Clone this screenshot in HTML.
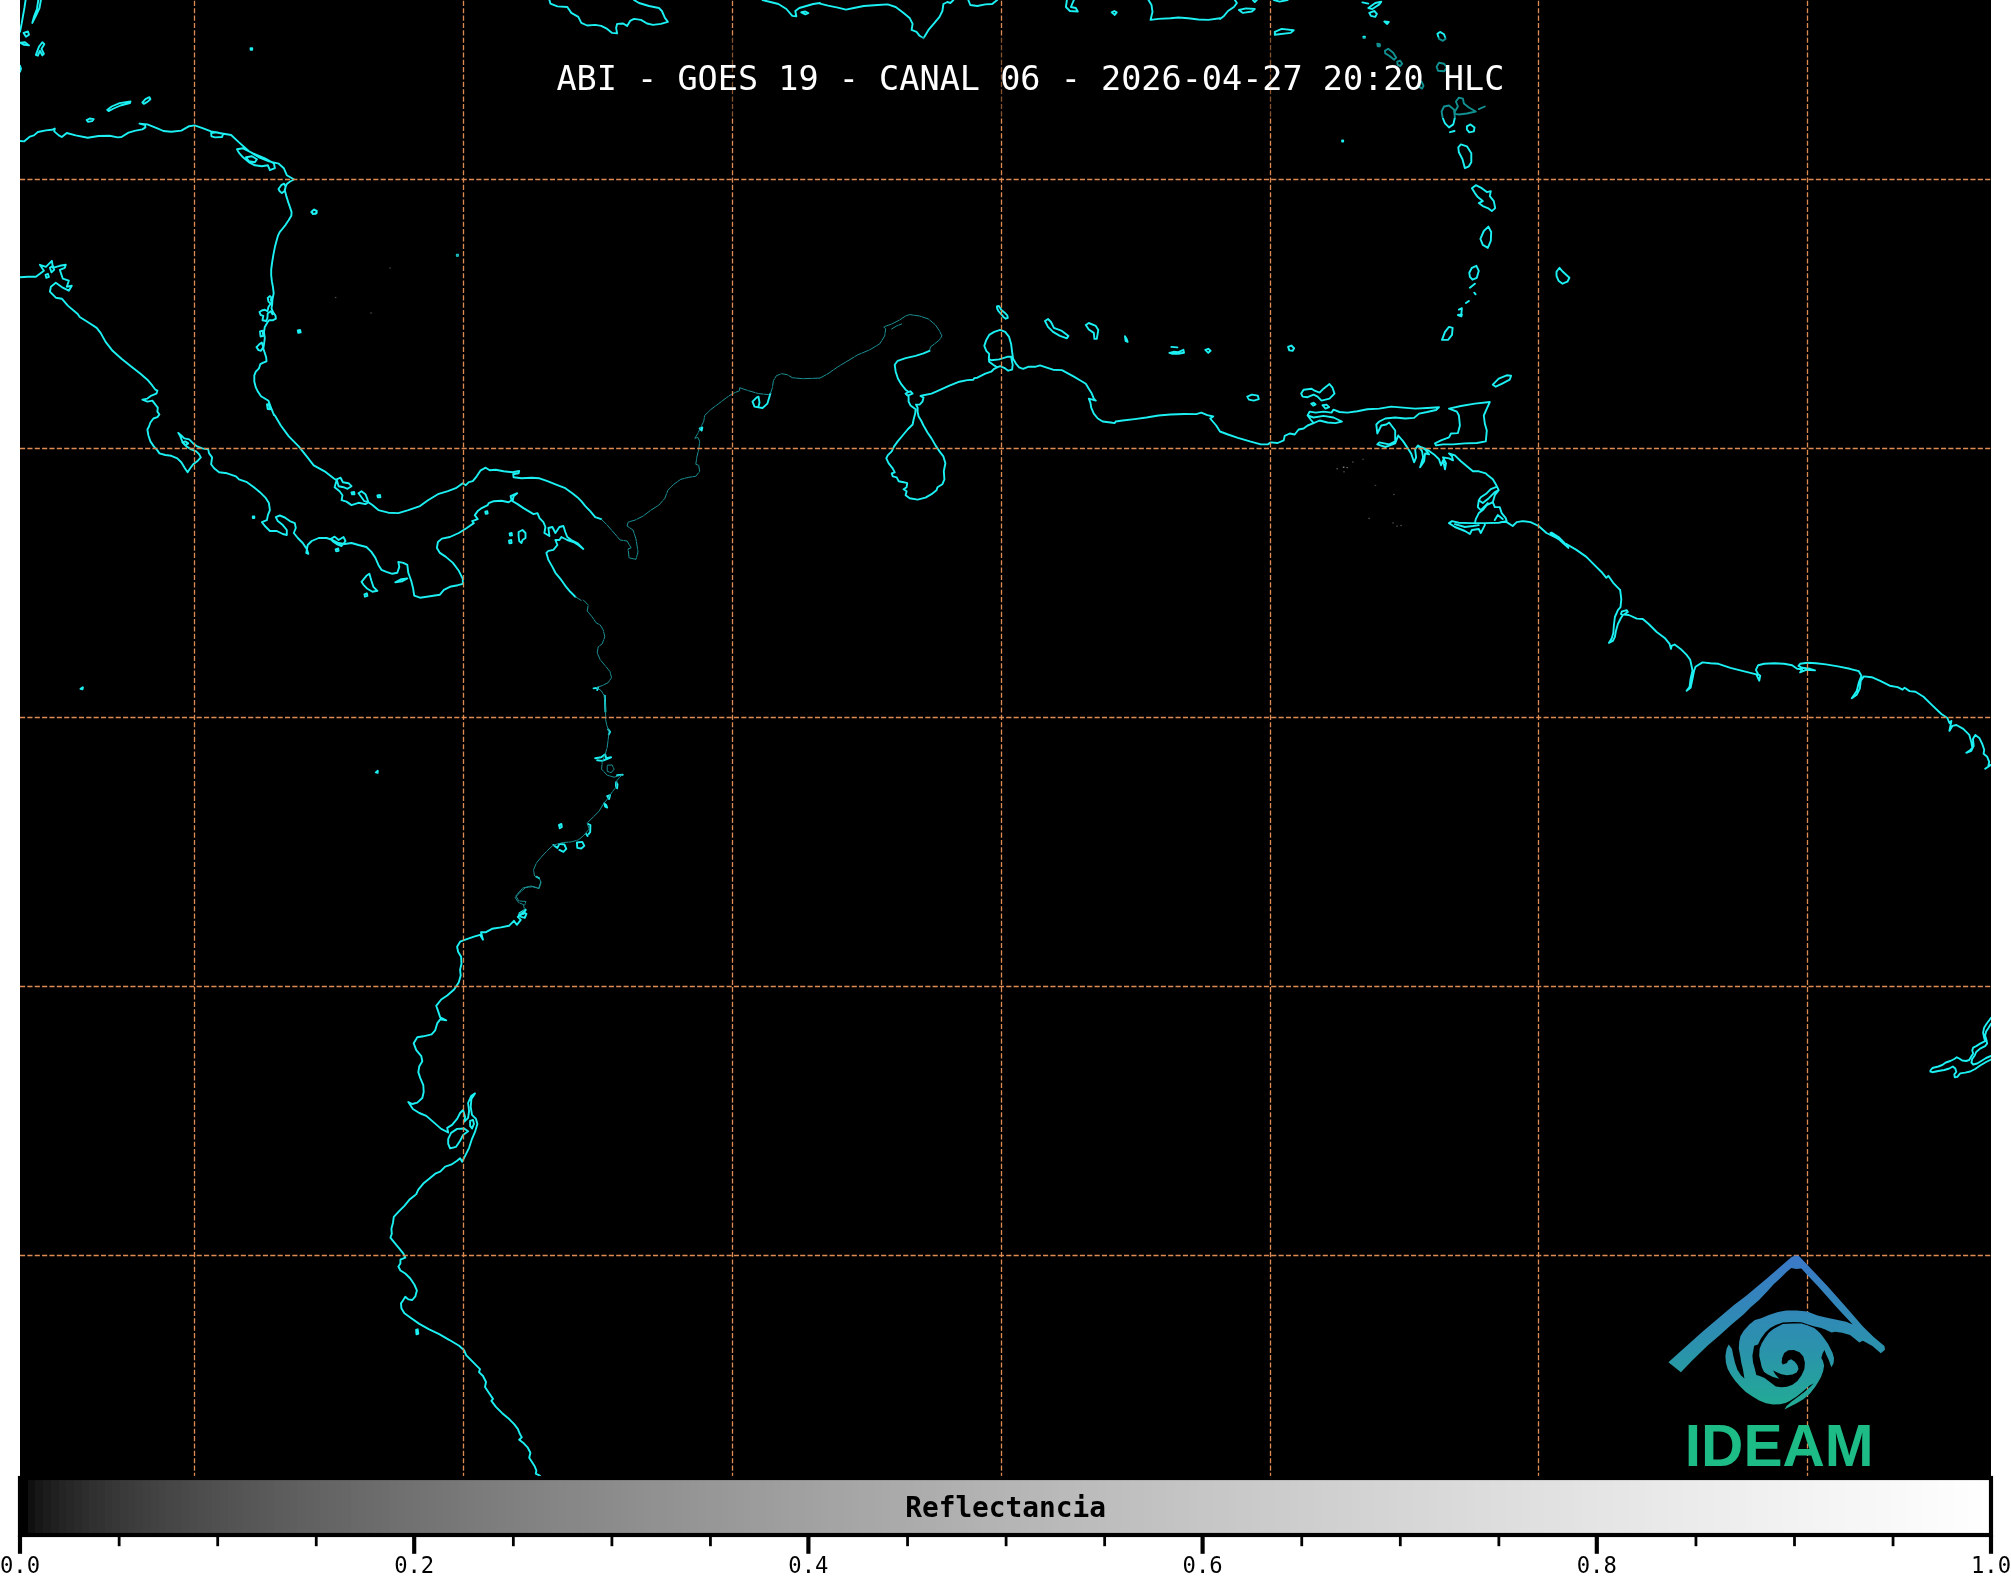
<!DOCTYPE html>
<html lang="es"><head><meta charset="utf-8"><title>ABI - GOES 19 - CANAL 06</title>
<style>
html,body{margin:0;padding:0;background:#fff;}
body{width:2011px;height:1577px;overflow:hidden;}
svg{display:block;will-change:transform;}
.mono{font-family:"DejaVu Sans Mono","Liberation Mono",monospace;}
.coast{fill:none;stroke:#1cf0f2;stroke-width:1.9;stroke-linejoin:round;stroke-linecap:round;}
.dim{stroke:#1c979b;stroke-width:0.95;stroke-dasharray:7 1.1;}

.grid{fill:none;stroke:#df8a52;stroke-width:1.3;stroke-dasharray:5.14 2.22;}
</style></head><body>
<svg width="2011" height="1577" viewBox="0 0 2011 1577">
<defs>
<linearGradient id="lg" x1="0" y1="1255" x2="0" y2="1470" gradientUnits="userSpaceOnUse">
<stop offset="0" stop-color="#3b78c8"/><stop offset="0.45" stop-color="#2a93ab"/><stop offset="0.8" stop-color="#1fb48c"/><stop offset="1" stop-color="#1dbb85"/>
</linearGradient>
<clipPath id="mapclip"><rect x="20" y="0" width="1971" height="1478"/></clipPath>
</defs>
<rect x="0" y="0" width="2011" height="1577" fill="#fff"/>
<rect x="20" y="0" width="1971" height="1478" fill="#000"/>
<g class="coast" clip-path="url(#mapclip)">
<path d="M25.6 0.0L24.4 8.0L23.0 15.9L21.6 23.9L20.0 31.9M40.9 0.0L39.5 8.0L35.9 15.9L32.3 22.9L33.9 16.9L36.9 9.0L38.3 0.0M23.6 32.9L28.0 31.5L29.0 34.8L26.0 36.8ZM20.0 42.8L25.0 42.2L29.0 45.4L24.0 44.8ZM35.9 54.8L38.9 46.8L42.3 42.2L44.3 44.2L41.5 48.8L43.9 53.8L42.3 55.4L39.9 50.8L37.9 55.7ZM20.0 65.7L21.0 68.7L20.0 71.7M20.0 141.0L24.0 141.4L30.0 136.6L33.9 135.4L37.9 132.0L45.9 130.4L51.9 129.8L54.8 128.6L54.2 131.4L58.8 135.4L61.8 137.0L66.8 133.0L75.7 135.4L87.7 137.8L98.6 136.0L109.6 135.8L117.6 137.4L121.5 137.0L128.5 132.6L135.5 130.6L142.4 129.4L145.4 127.4L145.0 125.0L139.5 123.6L147.4 124.4L157.4 128.4L163.4 131.0L171.3 131.8L181.3 130.6L189.2 126.2L194.6 125.4L203.2 128.4L211.1 131.4L219.1 133.0L231.1 135.0L239.0 142.4L249.0 151.3L258.9 157.3L268.9 161.3L278.8 163.7L283.8 168.2L286.8 175.2L293.8 179.2M211.1 133.0L217.1 132.4L223.1 133.8L222.1 137.0L215.1 137.4L211.5 136.4ZM237.0 149.3L243.0 148.3L253.0 153.3L264.9 158.3L273.9 163.3L274.9 168.2L269.9 170.2L267.9 165.3L261.9 166.3L254.9 165.3L249.0 162.3L243.0 157.3L239.0 152.9ZM246.0 157.3L252.0 156.3L256.9 159.3L254.9 162.3L249.0 161.3ZM86.7 120.1L89.7 118.5L93.7 119.1L92.1 121.1L88.1 121.9ZM107.2 109.9L111.6 106.5L119.6 103.1L130.5 101.5L129.9 103.1L120.5 105.5L113.6 108.5L108.6 111.1ZM142.4 102.5L145.4 99.2L149.4 97.2L150.4 99.2L147.4 101.9L143.8 103.9ZM250.6 48.2L252.2 48.2L252.2 49.8L250.6 49.8ZM311.7 211.4L314.3 209.5L316.7 211.1L315.7 213.8L312.7 214.0ZM20.0 277.2L28.0 276.8L35.9 276.8L39.9 273.8L43.9 270.8L39.9 264.8L45.9 266.8L51.9 260.8L52.9 267.8L59.8 265.8L65.8 264.8L64.8 267.8L59.8 269.8L62.8 278.7L68.8 280.7L66.8 286.7L71.8 285.7L68.8 290.7L62.8 287.7L55.8 282.7L50.9 286.7L49.9 291.7L55.8 297.7L61.8 298.7L67.8 305.6L77.7 314.0M49.9 267.8L52.9 265.8L54.2 269.8L51.5 272.4ZM45.5 274.8L47.9 273.8L48.9 276.8L46.3 277.8ZM549.4 0.0L550.4 3.6L557.4 6.4L567.3 7.0L571.3 12.9L578.3 16.9L581.3 22.9L587.2 25.5L595.2 24.9L601.2 25.9L607.2 28.9L612.1 32.9L617.1 33.4L616.1 27.9L617.1 23.9L623.1 23.5L627.1 25.9L630.1 20.9L634.0 18.9L641.0 19.9L647.0 23.5L653.0 24.9L660.9 23.9L667.9 21.9L664.9 17.9L661.9 11.0L658.9 8.0L649.0 6.0L639.0 3.0L634.0 0.0M762.5 0.0L770.4 2.0L778.4 4.0L786.4 9.0L792.3 15.9L796.3 16.3L795.3 11.0L799.3 8.0L806.3 6.0L813.2 4.0L820.0 3.0M801.3 12.3L805.3 11.5L808.3 13.1L805.3 14.3ZM456.8 254.7L458.0 254.7L458.0 255.8L456.8 255.8ZM820.0 3.6L828.0 5.6L837.9 7.6L845.9 9.6L853.8 8.0L863.8 6.0L877.7 5.0L887.7 4.4L895.7 7.0L903.6 12.9L909.6 17.9L912.6 23.9L911.6 29.9L916.6 31.9L919.6 35.8L923.5 38.2L928.5 29.9L934.5 22.9L939.5 16.9L942.4 11.0L943.4 4.0L947.4 2.0L950.4 3.0L953.4 0.0M968.3 0.0L970.3 5.0L977.3 6.0L985.3 4.4L992.2 4.0L997.2 0.0M1066.9 0.0L1065.9 7.0L1069.9 11.0L1077.8 11.5L1075.8 8.0L1070.9 7.0L1073.9 0.0M1111.7 12.3L1114.3 11.0L1116.7 12.3L1114.7 14.9ZM1148.5 0.0L1151.5 5.0L1152.5 11.9L1150.5 19.9L1158.5 18.9L1170.4 18.3L1178.4 17.5L1188.3 18.3L1198.3 19.5L1208.3 19.9L1220.0 18.3M1220.0 18.9L1224.0 15.9L1228.0 11.0L1233.9 7.0L1236.9 3.0L1234.9 0.0M1238.9 10.0L1245.9 8.4L1254.8 9.0L1251.9 11.5L1242.9 12.9ZM1252.9 0.0L1254.8 2.0L1256.8 0.0M1273.8 0.0L1279.7 1.6L1287.7 0.0M1274.8 31.9L1281.7 28.9L1293.7 30.3L1290.7 32.9L1274.8 34.8ZM1362.4 2.4L1368.3 3.6M1368.3 8.0L1375.3 3.0L1381.3 1.6L1379.3 4.4L1372.3 9.0ZM1369.3 12.9L1374.3 11.0L1376.9 13.9L1375.3 16.9L1370.9 15.9ZM1384.3 21.5L1388.8 21.9L1387.2 23.9ZM1363.4 36.6L1364.9 36.6L1364.9 38.0L1363.4 38.0ZM1437.4 33.8L1440.0 31.9L1444.0 34.2L1445.6 38.8L1443.0 40.8L1439.0 38.8ZM1342.1 140.4L1343.2 140.4L1343.2 141.6L1342.1 141.6ZM1458.3 147.3L1460.9 144.4L1466.9 146.3L1471.3 153.3L1471.3 162.3L1468.9 166.3L1464.9 168.2L1462.5 159.3L1458.9 152.3ZM1471.9 188.2L1475.8 185.2L1481.8 188.2L1486.8 192.1L1490.8 191.1L1489.8 196.1L1493.8 201.1L1495.2 208.1L1491.8 211.1L1487.8 208.1L1482.8 206.1L1478.8 203.1L1482.8 201.1L1477.8 197.1L1474.9 193.1ZM1480.4 238.9L1483.8 231.0L1488.4 226.6L1491.2 232.0L1490.8 240.9L1487.8 247.9L1482.8 244.9ZM1469.3 272.8L1471.9 267.8L1476.4 265.8L1478.8 270.8L1476.8 277.8L1472.5 279.7L1469.9 276.8ZM1469.9 287.7L1474.9 283.7M1474.3 292.7L1475.6 294.3M1465.9 303.0L1468.9 301.0M1458.9 309.6L1461.9 308.2L1461.3 314.0M1556.5 271.8L1559.5 267.8L1562.9 271.8L1569.4 277.8L1567.4 281.7L1562.5 283.7L1558.5 280.7L1556.5 275.8ZM1466.9 126.4L1470.5 124.4L1474.5 127.4L1473.9 131.4L1469.3 132.4L1466.9 129.4ZM1450.0 132.2L1454.5 131.0M77.7 314.0L79.7 317.0L87.7 322.0L96.7 327.9L100.6 332.9L105.6 341.9L112.6 350.8L121.5 358.8L131.5 366.8L140.5 373.7L147.4 379.7L152.4 385.7L155.4 389.7L157.4 390.7L156.4 393.6L151.4 395.6L147.4 398.6L142.4 399.6L147.4 401.6L152.4 400.6L155.4 404.6L157.8 407.6L157.4 411.6L159.4 414.5L157.4 417.1L153.4 418.5L150.4 422.5L149.0 426.5L147.4 429.5L148.4 435.5L150.4 441.4L153.8 446.4L157.4 450.4L159.4 453.4L165.3 455.0L171.3 455.8L177.3 458.4L181.3 462.3L184.9 468.3L187.6 472.3L190.2 468.3L193.2 464.3L197.2 461.3L200.8 457.4L199.2 454.4L196.2 451.4L191.2 449.4L186.3 446.4L182.3 441.4L180.3 436.4L178.3 432.9L181.3 435.5L184.3 438.4L189.2 439.4L193.2 443.4L197.2 446.4L202.2 448.4L208.2 449.4L209.1 453.4L212.1 457.4L211.1 464.3L214.1 468.3L219.1 472.3L227.1 473.3L236.0 476.3L239.0 479.3L247.0 482.2L253.9 487.2L259.9 492.2L265.9 498.2L268.9 503.1L269.9 510.1L267.9 515.1L266.9 520.1L261.9 522.1L264.9 526.0L269.9 531.0L276.8 531.0L282.8 534.0L286.8 535.0L286.8 530.0L282.8 525.1L277.8 521.1L275.8 517.1L279.8 515.5L284.8 517.5L289.8 521.1L294.8 523.1L295.8 528.0L293.8 533.0L297.8 538.0L302.7 543.0L306.7 548.9L308.3 553.9L306.3 552.9L307.7 545.0L311.7 541.0L318.7 538.0L326.6 538.0L332.6 540.0L338.6 543.0L344.5 544.0L351.5 543.0L358.5 545.0L366.4 547.0L371.4 551.9L375.4 557.9L378.4 564.9L381.4 569.8L386.4 571.8L392.3 573.8L397.3 572.8L399.3 566.9L398.3 561.9L403.3 562.9L407.3 564.9L408.3 572.8L411.2 580.8L413.2 588.8L414.2 595.7L420.0 597.7M182.3 442.4L185.3 441.4L188.2 443.4L185.3 445.4ZM330.6 539.0L334.6 536.6L338.6 540.0L343.5 537.0L345.5 541.0L341.6 546.0L336.6 544.0L333.6 542.0ZM335.6 549.3L338.2 548.5L338.6 550.9L336.2 551.3ZM361.5 581.8L366.4 575.8L369.4 573.8L371.4 580.8L373.4 586.8L377.4 590.8L372.4 591.8L367.4 588.8L363.5 584.8ZM364.4 594.3L366.8 593.3L367.4 595.9L365.0 596.7ZM395.3 582.4L401.3 579.2L407.3 578.4L402.3 581.2ZM252.8 516.5L254.3 516.5L254.3 518.1L252.8 518.1ZM274.9 415.5L280.8 425.5L288.8 436.4L298.7 446.4L306.7 456.4L313.7 465.3L324.6 471.3L333.6 478.3L336.6 480.3L334.6 487.2L339.6 491.2L342.5 495.2L341.6 500.2L346.5 501.6L351.5 505.1L358.5 502.8L365.4 504.1L368.4 502.2L372.4 505.1L378.4 510.1L388.3 512.7L398.3 513.1L408.3 510.1L420.0 506.1M336.6 479.3L340.6 477.7L342.9 482.2L348.5 483.2L351.5 486.2L347.5 488.8L343.5 487.2L338.6 486.2ZM358.5 493.2L361.5 491.2L365.4 494.2L367.4 499.2L368.4 502.2L364.4 501.2L361.5 497.2ZM351.5 492.4L354.1 492.0L354.5 494.2L352.1 494.4ZM377.4 495.4L380.0 495.0L380.4 497.2L377.8 497.4ZM297.8 330.5L300.1 329.9L300.7 332.3L298.3 332.9ZM420.0 506.1L428.0 500.2L437.9 494.2L447.9 491.2L455.8 488.2L462.8 483.2L465.8 485.2L468.8 482.2L472.8 481.2L476.7 476.3L480.7 470.3L485.7 467.7L489.7 470.3L495.7 469.7L503.6 471.3L512.6 472.3L519.2 470.9L518.6 473.3L513.2 474.3L513.6 477.3L521.5 478.3L531.5 477.7L539.5 478.3L547.4 481.2L557.4 485.2L565.3 488.2L572.3 493.2L577.3 497.2L581.3 501.2L585.3 506.1L590.2 511.1L595.2 517.1L601.2 519.1M758.5 406.6L759.5 402.6L758.5 396.6L756.5 397.6L752.5 401.6L754.5 406.6L762.5 408.0L767.4 403.6L770.4 393.6M699.7 428.5L702.3 427.5L701.7 430.5ZM420.0 597.7L430.0 596.3L439.9 594.7L443.9 589.8L449.9 586.8L457.8 585.2L462.8 583.8L462.8 578.8L458.8 570.8L452.9 562.9L445.9 556.9L439.9 552.9L436.9 547.9L437.9 542.0L441.9 538.6L449.9 537.0L458.8 533.0L466.8 528.0L473.8 523.1L472.2 521.1L477.7 519.1L474.8 515.1L477.7 511.1L481.7 508.1L487.7 505.1L488.7 503.1L493.7 501.2L501.6 500.8L508.6 502.2L511.6 500.2L510.6 496.2L517.2 493.2L513.6 496.2L512.6 501.2L517.6 504.1L523.5 508.1L528.5 511.1L533.5 514.1L537.5 513.1L539.5 518.1L543.4 522.1L545.4 527.0L544.4 533.0L549.4 536.0L548.4 528.0L552.4 527.0L555.4 533.0L559.4 527.0L563.4 526.0L565.3 532.0L567.3 537.0L571.3 540.0L577.3 543.0L583.3 548.9L578.3 545.0L573.3 542.0L567.3 540.0L561.4 537.0L559.4 540.0L555.4 540.0L557.4 545.0L553.4 549.9L548.4 550.9L546.4 552.9L548.4 559.9L552.4 566.9L555.4 572.8L560.4 578.8L565.3 585.8L570.3 591.8L575.3 596.7M518.6 532.0L522.5 530.0L525.5 533.0L525.5 538.0L522.5 540.0L521.5 543.0L519.2 541.0L518.6 536.0ZM509.6 533.4L511.6 533.0L512.0 535.4L510.0 535.6ZM509.0 540.6L511.2 540.0L511.6 543.0L509.4 543.4ZM485.3 511.7L487.3 511.3L487.7 513.5L485.7 513.7ZM929.5 350.8L923.5 353.4L915.6 355.8L905.6 358.2L897.7 360.8L894.7 364.8L895.7 371.7L898.0 378.7L901.6 384.7L905.6 389.7L908.6 392.0L905.6 393.6L907.6 395.6L912.6 393.6L910.6 391.3L908.6 392.0M908.6 395.6L908.6 401.6L910.6 405.6L915.6 409.2L915.2 413.6L913.6 419.5L912.6 424.5L907.6 429.5L902.6 435.5L897.7 441.4L894.1 446.4L891.7 451.4L887.7 455.4L886.3 458.4L888.7 463.3L892.7 468.3L894.7 472.3L891.7 473.3L892.7 476.3L896.7 477.3L898.6 481.2L903.6 482.2L907.2 483.2L906.6 487.2L903.6 489.2L906.6 491.2L905.6 495.2L909.6 498.2L917.6 499.6L925.5 497.6L931.5 494.2L936.5 490.2L937.5 487.2L942.4 484.2L944.4 479.3L943.8 471.3L945.4 463.3L943.4 456.4L939.5 451.4L935.5 445.4L931.5 438.4L927.5 432.5L923.5 425.5L921.1 420.5L918.6 416.5L917.6 411.6L917.6 407.6L916.0 404.6L919.6 404.6L922.5 401.6L923.5 397.6L920.5 396.0L923.5 395.2L931.5 393.6L939.5 390.1L949.4 385.7L959.4 381.7L967.3 380.1L973.3 379.7L974.3 378.1L977.3 377.7L985.3 373.7L991.2 371.7L994.2 368.8L997.2 367.4L993.2 364.8L989.2 361.8L988.8 358.8L991.2 360.2L999.2 359.4L1007.2 356.8L1011.1 356.8L1012.7 364.8L1012.1 369.7L1008.2 370.7L1004.2 367.8L1000.2 366.2L997.2 367.4M988.8 358.8L989.2 353.8L986.3 350.8L984.3 345.9L986.3 339.9L989.2 334.9L994.2 331.9L1000.2 329.9L1005.2 331.9L1009.1 336.9L1011.1 343.9L1012.1 351.8L1013.1 358.8L1016.1 363.8L1019.1 367.4L1023.1 368.8L1028.1 366.8L1035.0 366.8L1040.0 365.4L1046.0 367.4L1053.0 369.7L1061.9 370.1L1067.9 373.3L1073.9 376.7L1080.8 380.7L1085.8 383.7L1088.8 388.7L1091.8 393.6L1093.8 398.6L1095.8 400.6L1088.8 398.6L1090.4 402.6L1091.2 407.6L1093.8 413.6L1097.8 418.5L1102.7 421.5L1110.7 422.5L1114.7 423.1L1115.7 421.5L1122.6 420.5L1134.6 419.1L1146.5 417.5L1158.5 415.5L1170.4 414.5L1184.4 414.0L1196.3 414.1L1201.3 412.6L1207.3 415.1L1213.2 416.5L1210.2 418.5L1216.2 425.5L1220.0 431.5M996.9 306.5L998.9 306.0L1001.4 310.0L1004.4 312.4L1007.3 315.4L1007.8 317.9L1005.8 318.7L1003.4 316.9L1000.9 313.9L998.4 311.0L997.2 308.5ZM1045.0 321.0L1048.0 319.0L1051.0 322.0L1053.9 327.9L1061.9 330.9L1068.5 335.9L1066.9 338.3L1059.9 335.9L1053.0 331.9L1048.0 326.9ZM1085.8 325.0L1088.8 323.0L1095.8 325.9L1098.3 329.9L1096.8 338.9L1094.4 338.9L1093.8 332.9L1088.8 329.5ZM1125.0 336.3L1126.6 338.9L1127.6 341.9L1125.6 340.9ZM1169.4 352.8L1173.4 351.8L1178.4 352.2L1183.4 349.8L1184.0 352.8L1178.4 353.8L1172.4 353.8ZM1171.4 346.9L1177.4 347.4M1205.3 349.8L1208.3 348.8L1210.6 350.8L1208.3 352.8ZM1220.0 431.5L1228.0 434.5L1237.9 437.8L1249.9 441.4L1260.8 444.4L1267.8 444.4L1270.8 442.4L1277.7 443.0L1283.7 440.4L1284.7 435.9L1289.7 433.5L1294.7 434.5L1298.6 429.5L1303.6 428.5L1307.6 425.5L1313.6 423.1L1310.6 419.5L1307.6 415.5L1309.6 411.6L1315.6 412.6L1323.5 411.6L1331.5 412.6L1333.5 409.6L1339.5 412.0L1347.4 412.6L1357.4 411.2L1367.3 409.2L1379.3 408.6L1391.2 406.6L1403.2 407.6L1415.1 408.6L1427.1 408.0L1439.0 407.2L1436.0 410.0L1427.1 412.0L1419.1 413.6L1414.1 417.9L1405.2 418.5L1395.2 417.5L1385.3 418.5L1379.3 421.5L1376.3 424.5L1377.3 433.5L1381.3 425.5L1386.3 424.5L1389.2 422.5L1395.2 430.5L1395.2 441.4L1389.2 444.4L1379.3 442.4L1377.3 444.4L1385.3 447.0L1395.2 443.4L1398.2 435.5L1403.2 441.4L1407.2 447.4L1411.1 453.4L1414.1 462.3L1416.1 457.4L1415.1 449.4L1418.1 445.4L1422.1 451.4L1423.1 457.4L1420.1 467.3L1424.1 461.3L1425.1 453.4L1429.1 454.4L1425.1 449.4L1419.1 446.4L1427.1 449.4L1434.0 454.4L1439.0 459.3L1441.0 465.3L1443.0 460.3L1445.0 469.3L1446.0 463.3L1443.0 457.4L1449.0 458.4L1453.0 460.3L1452.0 456.4L1449.0 453.4L1454.9 455.4L1460.9 461.3L1466.9 466.3L1472.9 471.3L1478.8 471.3L1485.8 473.3L1487.8 475.3L1492.8 479.3L1495.8 484.2L1498.7 490.2L1494.8 495.2L1492.8 502.2L1494.8 507.1L1499.7 507.1L1501.7 513.1L1505.7 518.1L1506.7 521.1L1500.7 522.1L1506.7 522.1L1512.7 526.0L1516.7 522.1L1522.6 521.1L1530.6 522.1L1538.6 526.0L1546.5 533.0L1556.5 538.0L1566.4 544.0L1576.4 549.9L1586.4 556.9L1594.3 564.9L1602.3 572.8L1606.3 577.8L1608.3 575.8L1613.2 582.8L1620.0 589.8M1307.6 415.5L1313.6 417.5L1323.5 415.9L1333.5 417.5L1341.9 421.5L1335.5 423.1L1327.5 422.5L1319.6 420.5L1313.6 423.1M1495.8 487.2L1490.8 489.2L1486.8 493.2L1480.8 497.2L1478.8 500.2L1482.8 503.1L1488.8 498.2L1494.8 492.2L1498.7 490.2M1492.8 502.2L1486.8 505.1L1482.8 510.1L1478.8 513.1L1475.8 519.1L1474.9 523.1M1478.8 500.2L1477.8 507.1L1480.8 510.1L1487.8 503.1M1449.0 523.1L1452.0 521.1L1458.9 522.7L1470.9 523.1L1484.8 523.1L1498.7 522.7L1506.7 521.1M1449.0 523.1L1454.9 527.0L1464.9 531.0L1469.9 534.0L1471.9 530.0L1478.8 529.0L1480.8 533.0L1484.8 525.1L1484.8 523.1M1454.9 524.1L1464.9 527.0L1472.9 526.0L1478.8 525.1M1494.8 520.1L1497.8 515.1L1502.7 519.1M1550.5 533.0L1558.5 539.0L1568.4 547.9L1567.4 546.0L1558.5 537.0L1551.5 532.6ZM1449.0 408.6L1460.9 406.0L1474.9 403.6L1489.8 402.0L1486.8 408.6L1483.8 415.5L1484.8 423.5L1486.8 430.5L1485.8 441.4L1476.8 443.0L1464.9 443.4L1453.0 444.4L1443.0 444.4L1436.0 445.4L1435.0 443.4L1441.0 440.4L1449.0 437.4L1451.0 433.5L1457.9 433.1L1459.9 425.5L1458.9 415.5L1456.9 411.6ZM1492.8 384.7L1498.7 378.7L1506.7 375.3L1511.1 375.7L1509.7 379.7L1502.7 383.3L1495.8 386.7ZM1442.0 339.9L1445.0 331.9L1449.0 326.9L1452.6 327.9L1452.0 334.9L1448.0 339.9ZM1457.9 315.0L1461.9 314.4L1461.3 316.4ZM1301.2 393.6L1303.6 389.7L1311.6 388.7L1314.6 390.7L1319.6 392.6L1323.5 388.7L1329.5 384.1L1332.5 387.7L1334.5 393.6L1329.5 398.6L1321.5 400.6L1317.6 396.6L1313.6 394.6L1307.6 397.2L1302.6 396.6ZM1311.2 403.6L1313.6 402.8L1315.6 404.4L1313.2 405.6ZM1322.5 405.2L1326.5 404.6L1329.1 407.2L1325.5 408.6ZM1288.1 346.9L1291.3 345.5L1294.1 348.2L1292.7 350.8L1289.3 350.4ZM1247.3 396.6L1251.9 394.6L1257.8 395.6L1258.8 399.2L1253.8 400.6L1248.9 399.6ZM1620.1 589.7L1621.3 599.1L1620.5 607.1L1617.9 610.1L1614.9 617.0L1613.9 625.0L1613.3 633.0L1611.9 637.9L1608.9 642.9L1612.9 640.9L1614.9 636.9L1615.9 631.0L1617.9 624.0L1620.9 618.0L1622.9 615.0L1620.9 614.0L1621.9 611.4L1626.8 610.3L1627.8 612.0L1623.9 614.6L1628.8 615.0L1636.8 618.6L1642.8 619.0L1648.7 624.0L1656.7 632.0L1664.7 637.9L1669.6 643.9L1671.0 648.9L1671.6 645.9L1674.6 644.5L1680.6 648.9L1686.6 654.9L1690.2 659.8L1691.5 665.8L1692.5 670.8L1690.6 678.7L1689.6 686.7L1686.6 690.7L1690.6 687.7L1692.5 678.7L1694.1 670.8L1695.5 666.8L1702.5 662.4L1710.5 663.2L1718.4 663.8L1730.4 667.8L1742.3 670.8L1756.3 674.4L1759.2 680.7L1760.2 675.8L1758.2 674.4L1755.9 669.8L1758.2 665.2L1764.2 663.8L1774.2 663.2L1784.1 663.8L1792.1 665.2L1797.1 668.8L1802.1 669.2L1800.1 672.4L1806.0 669.8L1815.0 670.4L1810.0 668.8L1802.1 667.8L1798.5 665.8L1800.1 663.8L1807.6 662.8L1816.0 663.2L1825.9 664.4L1837.9 666.4L1849.8 668.8L1858.8 671.2L1861.4 675.8L1858.8 682.7L1856.8 690.7L1851.8 698.3L1856.8 694.7L1859.8 688.7L1860.8 680.7L1863.8 676.4L1871.7 677.2L1879.7 680.7L1889.7 685.7L1897.6 687.1L1902.6 689.7L1904.6 687.7L1909.6 691.1L1915.5 691.7L1923.5 696.7L1931.5 704.6L1941.4 714.0M1941.4 714.0L1947.4 718.0L1949.4 723.0L1951.4 721.0L1950.4 725.9L1949.4 730.9L1952.4 725.9L1956.4 725.0L1963.3 728.9L1969.3 734.9L1971.3 741.9L1972.3 747.8L1969.3 750.8L1966.3 752.8L1971.3 750.8L1973.7 745.9L1972.9 738.9L1975.3 734.9L1979.3 737.9L1982.2 743.9L1984.2 749.8L1983.6 753.8L1987.2 756.8L1989.2 761.8L1988.2 766.8L1985.2 768.8L1991.0 764.8M1991.0 1017.7L1989.6 1019.7L1986.6 1023.7L1984.1 1027.7L1983.1 1032.6L1984.1 1037.6L1985.1 1041.1L1980.1 1043.6L1976.2 1046.1L1973.2 1047.6L1972.2 1050.5L1973.2 1053.5L1971.2 1056.5L1969.2 1060.0L1966.2 1061.0L1962.2 1060.5L1959.2 1058.5L1956.8 1057.3L1954.3 1059.0L1950.3 1061.0L1945.8 1062.5L1942.3 1065.0L1938.3 1066.5L1932.4 1068.0L1930.4 1070.5L1930.4 1071.7L1932.4 1072.2L1938.3 1071.0L1944.3 1070.0L1949.3 1068.5L1952.8 1066.5L1955.3 1068.5L1956.3 1072.0L1954.3 1074.4L1954.8 1077.4L1957.3 1076.9L1960.2 1073.4L1965.2 1072.6L1970.2 1071.5L1975.2 1069.0L1980.1 1065.5L1986.1 1062.0L1991.0 1059.5M1991.0 1023.7L1988.6 1027.7L1986.1 1031.6L1985.1 1035.6L1986.6 1040.6L1987.1 1043.6L1985.1 1046.1L1980.1 1048.6L1976.2 1052.0L1974.7 1055.5L1972.2 1059.0L1971.4 1062.5L1973.2 1064.5L1977.2 1063.5L1982.1 1060.5L1986.1 1058.0L1991.0 1056.0M593.6 688.4L598.2 687.6L597.2 690.0M604.8 695.6L605.4 711.5M608.2 729.4L610.1 731.8L608.8 734.4M595.2 758.3L601.2 757.3L605.2 754.3L606.2 758.3L611.1 757.3L606.2 759.3L602.2 760.9L597.2 760.3M617.1 775.2L622.7 774.8M616.1 782.2L617.5 784.2L617.1 788.2L615.9 786.2ZM607.2 796.1L610.1 795.1L609.1 799.1ZM604.2 803.5L606.2 805.1L607.2 807.5L605.2 806.7ZM588.2 824.0L590.4 825.0L590.2 832.0L588.8 833.9M586.3 833.9L587.6 835.9M559.0 825.0L561.4 824.0L561.8 827.0L559.8 828.2ZM553.4 844.9L557.4 847.9L559.4 843.9L564.4 844.5L566.3 848.9L563.4 851.9L559.4 849.9M576.9 842.5L582.3 841.9L584.3 845.9L581.3 848.5L577.3 847.9ZM536.5 876.8L539.1 878.3M519.6 913.0L525.5 909.6L523.5 914.0M525.8 909.9L522.8 913.8L517.8 916.8L520.8 919.8L516.8 924.8L513.9 920.8L508.9 925.8L500.9 927.4L492.0 928.8L486.0 932.2L481.0 932.2L483.0 939.7L480.0 934.8L474.0 936.7L466.1 939.3L460.1 941.7L457.1 946.7L458.1 951.7L461.1 956.7L461.5 963.6L460.1 969.6L460.7 975.6L458.7 982.5L454.1 989.5L447.2 995.5L441.2 999.5L436.2 1005.8L438.2 1011.4L440.2 1017.4L446.2 1020.4L440.2 1019.4L437.2 1023.4L435.2 1030.3L431.6 1034.3L423.3 1036.3L417.3 1037.3L413.7 1043.3L416.3 1050.2L421.3 1056.2L422.3 1061.2L419.3 1066.2L418.3 1072.1L420.3 1078.1L423.3 1085.1L423.7 1092.0L422.3 1098.0L417.3 1102.6L412.3 1104.0L408.3 1102.0L412.9 1109.0L419.3 1113.0L426.3 1115.9L433.2 1121.9L441.2 1128.9L448.2 1132.5L447.2 1127.9L452.1 1124.9L457.1 1118.9L460.1 1113.0L463.1 1110.0L465.1 1116.9L464.1 1121.9L468.1 1117.9L469.1 1111.0L468.1 1103.0L471.1 1096.0L475.0 1093.4L471.4 1099.0L470.7 1107.0L472.0 1114.9L476.0 1118.9L477.4 1123.9L475.0 1131.9L472.0 1138.8L469.1 1147.8L465.1 1155.8L462.1 1161.7L460.1 1158.3L457.1 1160.7L451.1 1164.7L445.2 1166.7L440.2 1171.7L435.2 1173.7L429.2 1178.7L423.3 1183.6L418.3 1189.6L416.3 1194.0M518.8 914.8L522.8 911.9L526.4 913.8L524.8 917.8L521.2 916.8ZM448.2 1138.8L451.1 1132.9L457.1 1128.9L464.1 1128.5L468.1 1131.3L463.1 1134.9L460.1 1140.8L456.1 1146.8L450.1 1148.4L448.2 1143.8ZM470.1 1120.9L473.0 1119.9L474.0 1123.9L472.0 1128.5L470.1 1125.9ZM415.3 1194.9L409.3 1199.8L404.4 1205.8L398.4 1211.8L393.8 1216.8L393.0 1222.7L391.4 1228.7L391.8 1233.7L390.4 1237.7L394.4 1242.6L399.4 1248.6L403.4 1253.6L405.3 1257.6L400.4 1259.6L400.4 1263.5L398.4 1266.5L400.4 1270.5L405.3 1273.5L410.3 1278.5L414.3 1284.5L416.9 1290.4L415.3 1296.4L412.3 1300.0L408.3 1299.4L405.3 1296.8L403.0 1300.4L401.0 1303.4L401.4 1308.3L404.4 1313.3L411.3 1318.3L419.3 1323.9L429.2 1329.3L439.2 1334.2L449.1 1339.8L459.1 1345.8L464.1 1350.2L466.1 1355.1L471.1 1360.1L476.0 1365.1L480.0 1369.1L479.0 1372.1L483.0 1376.0L486.0 1382.0L485.0 1387.0L489.0 1393.0L493.0 1398.9L491.4 1400.9L495.9 1406.9L501.9 1412.9L507.9 1417.9L509.9 1419.8L513.9 1423.8L517.8 1428.8L519.8 1433.8L521.8 1437.4L519.2 1439.8L523.8 1443.3L527.8 1447.7L530.4 1452.7L529.2 1457.7L531.8 1461.7L534.8 1466.6L536.4 1470.6L535.8 1473.6L539.7 1475.6L540.7 1477.0M416.1 1329.8L417.7 1329.3L418.3 1333.8L416.5 1334.2ZM80.5 688.8L82.9 687.2L82.5 689.2ZM375.8 772.4L377.8 770.8L377.6 772.8ZM293.1 180.0L290.1 181.5L287.1 183.7L285.6 186.7L284.9 190.4L286.4 196.4L288.3 202.4L290.1 207.6L291.6 212.1L291.3 215.8L288.6 220.3L285.6 224.8L282.7 228.5L279.7 232.2L277.9 235.9L276.4 241.2L274.9 247.1L273.4 254.6L272.2 262.0L271.2 269.5L271.2 275.5L271.9 281.4L273.0 287.4L273.7 293.4L272.5 299.3L272.2 303.8L271.5 308.3L273.0 312.0L275.5 315.8L275.9 318.7L273.0 320.2L269.2 320.2L267.4 322.5L264.8 326.9L264.0 332.2L264.8 338.1L264.0 344.1L263.3 348.6L264.8 353.0L266.2 357.5L266.5 361.3L263.3 362.7L260.3 364.2L258.8 368.7L255.8 371.7L254.3 375.4L254.3 381.4L255.8 387.4L258.0 391.8L261.0 396.3L264.8 398.5L268.5 400.8L270.7 406.8L273.0 412.7L274.0 415.0M278.5 189.0L281.2 185.2L284.1 183.7L285.6 186.7L284.4 191.2L281.9 193.1L279.7 191.2ZM272.2 303.8L270.7 299.3L271.9 297.9L270.0 296.1L267.7 297.9L268.5 301.6L270.7 303.8L268.5 306.8L267.4 311.3L264.8 309.8L261.8 310.5L259.5 312.0L260.6 315.0L263.3 315.8L262.5 320.2L266.2 321.0L267.4 318.0L267.7 313.5L270.7 311.3L272.5 314.3M256.5 347.1L259.5 344.1L261.8 342.6L263.3 347.1L261.0 350.8L258.5 350.1ZM260.0 331.4L262.5 330.7L263.3 335.9L260.6 336.6ZM267.0 404.5L268.9 403.8L270.0 409.4L267.7 409.0ZM311.3 212.1L313.7 209.8L316.7 210.6L316.7 213.1L313.2 214.0ZM298.2 330.4L300.0 330.1L300.3 331.9L298.5 332.2Z"/>
<path class="dim" d="M601.2 519.1L607.2 525.1L614.1 533.0L620.1 540.0L627.1 541.0L631.1 547.9L628.1 548.9L629.1 557.9L636.0 559.3L638.0 551.9L636.0 539.0L633.0 530.0L627.1 526.0L628.1 522.1L635.0 520.1L643.0 516.1L651.0 510.1L658.9 505.1L664.9 498.2L667.9 490.2L673.9 484.2L680.8 479.3L688.8 477.3L695.8 476.3L699.7 471.3L698.7 465.3L695.8 464.3L696.8 457.4L698.7 449.4L699.7 441.4L697.8 437.4L694.8 438.4L697.8 433.5L700.7 427.5L703.7 421.5L704.7 415.5L710.7 409.6L718.7 403.6L726.6 397.6L732.6 393.6L739.6 390.7L739.6 387.7L748.5 390.7L758.5 393.6L768.4 394.6M770.4 393.6L772.4 387.7L773.4 380.7L776.4 375.7L781.4 373.7L787.3 374.7L792.3 377.7L802.3 378.7L820.0 378.1M575.3 596.7L581.7 600.7M820.0 378.1L828.0 373.7L837.9 366.8L847.9 360.8M847.9 360.8L857.8 354.8L869.8 349.8L879.7 343.9L884.7 335.9L885.7 328.9L883.7 326.9L891.7 324.0L899.6 320.0L905.6 316.0L909.6 314.6L919.6 316.0L928.5 319.0L935.5 325.0L939.5 330.9L941.9 335.9L939.5 339.9L934.5 343.9L930.5 346.9L929.5 350.8M891.7 328.9L896.7 325.9L901.6 324.0M583.3 600.0L588.2 605.0L587.2 611.0L592.2 616.9L596.2 622.9L600.2 624.9L603.2 629.9L604.8 636.8L602.2 643.8L598.2 646.8L597.2 652.8L600.2 659.7L605.2 665.7L610.1 671.7L611.5 677.7L608.2 682.6L602.2 685.6L596.2 687.6L601.2 690.6L604.2 695.6L605.2 703.5L605.6 711.5L605.6 719.5L606.8 725.4L609.1 731.4L608.2 739.4L607.2 747.3L605.2 754.3L602.2 762.3L601.6 769.2L607.2 775.2L614.1 777.2L622.1 774.8L617.1 780.2L616.1 787.2L612.1 792.1L608.2 798.1L603.2 804.1L599.2 811.1L593.2 817.0L587.2 823.0L589.2 829.0L583.3 835.9L578.3 839.9L571.3 841.9L563.4 842.5L557.4 843.9L552.4 845.9L547.4 850.5L541.5 856.8L536.5 862.8L533.5 869.8L534.5 875.8L539.5 878.7L541.1 882.7L539.1 888.7L532.5 886.7L525.5 887.7L519.6 892.7L515.2 897.7L518.6 902.6L523.5 904.6L524.5 909.6L521.5 912.6L518.6 914.0M607.2 765.3L612.1 764.9L614.1 769.2L611.1 772.8L607.2 771.2ZM540.7 882.0L538.7 888.0L530.8 886.0L522.8 888.0L515.8 895.9L518.8 900.9L525.8 901.5L524.8 904.9M456.9 254.9L458.1 254.9L458.1 255.9L456.9 255.9Z"/>
<path d="M1377.3 43.8L1379.9 44.2L1379.9 46.2L1377.7 46.2ZM1384.9 50.8L1388.2 48.8L1393.2 52.8L1396.2 57.7L1394.2 59.7L1389.2 55.7L1385.3 53.4ZM1397.2 61.7L1400.2 60.7L1402.2 63.7L1400.2 66.1L1397.6 64.7ZM1436.6 66.7L1439.0 62.7L1444.0 63.7L1447.0 67.7L1444.0 71.3L1438.0 70.7ZM1419.1 82.6L1421.5 81.6L1423.5 85.6L1422.1 88.6L1419.7 87.2ZM1441.6 111.5L1444.0 106.5L1449.0 105.5L1453.9 109.5L1454.9 117.5L1453.3 124.4L1449.0 127.4L1445.0 123.4L1442.6 117.5ZM1454.9 111.5L1457.9 106.5L1455.9 101.5L1458.9 97.6L1462.9 98.6L1463.9 103.5L1468.9 107.5L1475.8 111.5L1466.9 113.5L1458.9 114.5L1454.9 113.9ZM1478.8 109.1L1484.8 106.5"/>
</g>
<g fill="#fff"><rect x="1336.4" y="468.2" width="1.6" height="1.2" fill-opacity="0.35"/><rect x="1342.8" y="466.6" width="1.6" height="1.2" fill-opacity="0.6"/><rect x="1346.4" y="467.0" width="1.6" height="1.2" fill-opacity="0.4"/><rect x="1343.2" y="471.2" width="1.6" height="1.2" fill-opacity="0.3"/><rect x="1352.0" y="461.4" width="1.6" height="1.2" fill-opacity="0.3"/><rect x="1362.3" y="458.7" width="1.6" height="1.2" fill-opacity="0.25"/><rect x="1393.1" y="493.9" width="1.6" height="1.2" fill-opacity="0.3"/><rect x="1392.3" y="522.3" width="1.6" height="1.2" fill-opacity="0.3"/><rect x="1396.3" y="525.5" width="1.6" height="1.2" fill-opacity="0.3"/><rect x="1400.3" y="524.9" width="1.6" height="1.2" fill-opacity="0.3"/><rect x="1368.3" y="517.8" width="1.6" height="1.2" fill-opacity="0.3"/><rect x="1374.6" y="484.8" width="1.6" height="1.2" fill-opacity="0.25"/><rect x="334.8" y="296.9" width="1.6" height="1.2" fill-opacity="0.3"/><rect x="389.3" y="267.4" width="1.6" height="1.2" fill-opacity="0.25"/><rect x="370.3" y="312.4" width="1.6" height="1.2" fill-opacity="0.3"/></g>
<g class="grid" clip-path="url(#mapclip)">
<path d="M194.5 1478V0"/>
<path d="M463.5 1478V0"/>
<path d="M732.5 1478V0"/>
<path d="M1001.5 1478V0"/>
<path d="M1270.5 1478V0"/>
<path d="M1538.5 1478V0"/>
<path d="M1807.5 1478V0"/>
<path d="M20 179.5H1991"/>
<path d="M20 448.5H1991"/>
<path d="M20 717.5H1991"/>
<path d="M20 986.5H1991"/>
<path d="M20 1255.5H1991"/>
</g>
<g id="logo">
<path fill="url(#lg)" d="M1852.7 1324.6L1846.2 1321.8L1836.6 1319.8L1827.1 1317.8L1817.5 1315.4L1807.2 1311.5L1796.7 1310.5L1786.3 1310.5L1777.2 1312.2L1768.8 1315.0L1761.1 1318.3L1754.9 1320.1L1749.3 1324.4L1743.7 1330.7L1740.4 1336.3L1739.2 1341.8L1738.8 1348.8L1740.2 1355.8L1741.3 1362.8L1743.0 1369.7L1744.4 1378.5L1740.9 1375.3L1737.4 1369.7L1735.0 1362.8L1733.3 1355.8L1731.9 1348.8L1728.7 1344.6L1726.6 1348.8L1725.4 1355.8L1725.9 1362.8L1727.7 1369.0L1731.2 1375.3L1735.3 1380.9L1740.2 1386.5L1745.8 1392.1L1752.1 1396.2L1759.1 1400.4L1766.0 1403.2L1773.0 1404.6L1780.0 1404.3L1785.6 1402.9L1789.7 1401.1L1796.7 1396.6L1803.7 1390.7L1809.3 1385.8L1813.8 1383.3L1810.5 1386.5L1804.4 1391.9L1797.4 1397.3L1791.3 1401.7L1786.6 1406.0L1784.5 1409.5L1789.7 1406.7L1796.7 1403.2L1803.7 1399.0L1810.0 1393.5L1814.9 1387.2L1817.6 1383.0L1820.8 1377.4L1823.2 1371.1L1824.1 1365.6L1822.9 1360.7L1821.3 1357.9L1822.5 1353.7L1824.4 1350.1L1826.4 1355.1L1828.8 1360.0L1830.5 1364.9L1831.6 1367.3L1833.7 1362.8L1834.0 1357.9L1832.6 1353.0L1830.5 1348.8L1828.1 1343.9L1824.6 1339.1L1820.4 1333.5L1817.6 1330.7L1814.2 1328.0L1807.2 1325.2L1801.6 1323.4L1801.6 1322.3L1806.5 1324.1L1813.5 1326.2L1820.4 1327.8L1824.6 1329.3L1831.6 1332.4L1835.1 1331.7L1842.1 1332.8L1850.0 1334.9L1855.7 1339.5L1859.3 1342.5L1862.9 1340.7L1872.4 1346.1L1880.8 1353.2L1885.0 1349.7L1884.4 1346.1L1873.6 1337.1L1862.9 1326.4L1846.2 1307.3L1827.1 1285.8L1808.0 1265.5L1799.0 1256.0L1794.9 1255.4L1791.3 1257.2L1767.4 1278.0L1745.9 1295.9L1734.0 1304.9L1703.0 1331.2L1668.4 1362.2L1680.9 1372.3L1692.2 1360.4L1707.7 1345.5L1719.7 1335.3L1731.6 1324.6L1743.5 1314.4L1750.7 1307.3L1759.1 1300.1L1767.4 1291.2L1773.4 1284.6L1780.5 1278.0L1786.5 1272.1L1791.3 1267.9L1796.1 1268.9L1801.4 1268.5L1808.0 1275.7L1817.5 1285.8L1827.1 1296.5L1836.6 1307.3L1843.8 1315.0Z"/>
<path fill="#000" d="M1801.6 1322.2L1793.2 1322.0L1782.8 1322.5L1775.8 1325.0L1770.2 1328.1L1765.3 1332.6L1761.1 1338.2L1758.0 1344.5L1754.2 1345.7L1752.4 1355.8L1753.1 1362.8L1754.9 1369.0L1756.3 1375.0L1759.1 1375.7L1764.6 1378.1L1770.2 1382.3L1775.8 1386.5L1781.4 1387.3L1787.0 1386.8L1792.5 1384.7L1797.4 1380.9L1801.6 1375.3L1804.4 1369.0L1804.9 1362.8L1803.3 1356.5L1799.5 1352.3L1793.9 1350.1L1788.3 1350.2L1784.2 1353.0L1782.1 1357.9L1781.7 1362.8L1782.8 1364.5L1787.0 1363.1L1788.0 1360.7L1791.1 1359.3L1794.6 1361.4L1797.4 1364.9L1798.5 1369.0L1796.7 1372.5L1792.5 1374.6L1787.0 1375.3L1781.4 1374.3L1775.8 1371.8L1773.1 1370.6L1775.1 1373.9L1779.3 1378.8L1773.0 1377.1L1767.4 1374.3L1763.9 1371.8L1761.7 1367.0L1760.8 1362.8L1759.2 1355.8L1759.6 1348.8L1761.8 1343.2L1765.0 1338.0L1768.8 1332.8L1773.0 1329.3L1777.9 1326.5L1782.8 1324.1L1793.2 1323.4L1801.6 1323.5Z"/>
<text x="1779.2" y="1465.6" font-family="'Liberation Sans',Arial,sans-serif" font-weight="bold" font-size="58.6" fill="#1dbb85" text-anchor="middle">IDEAM</text>
</g>
<rect x="536" y="37.5" width="987" height="80.5" fill="#000" fill-opacity="0.4"/>
<text class="mono" x="1030.4" y="89.7" font-size="33.5" fill="#fff" text-anchor="middle" xml:space="preserve">ABI - GOES 19 - CANAL 06 - 2026-04-27 20:20 HLC</text>
<g shape-rendering="crispEdges">
<rect x="20.00" y="1478" width="8.30" height="57" fill="rgb(0,0,0)"/>
<rect x="27.70" y="1478" width="8.30" height="57" fill="rgb(16,16,16)"/>
<rect x="35.40" y="1478" width="8.30" height="57" fill="rgb(23,23,23)"/>
<rect x="43.10" y="1478" width="8.30" height="57" fill="rgb(28,28,28)"/>
<rect x="50.80" y="1478" width="8.30" height="57" fill="rgb(32,32,32)"/>
<rect x="58.50" y="1478" width="8.30" height="57" fill="rgb(36,36,36)"/>
<rect x="66.20" y="1478" width="8.30" height="57" fill="rgb(39,39,39)"/>
<rect x="73.89" y="1478" width="8.30" height="57" fill="rgb(42,42,42)"/>
<rect x="81.59" y="1478" width="8.30" height="57" fill="rgb(45,45,45)"/>
<rect x="89.29" y="1478" width="8.30" height="57" fill="rgb(48,48,48)"/>
<rect x="96.99" y="1478" width="8.30" height="57" fill="rgb(50,50,50)"/>
<rect x="104.69" y="1478" width="8.30" height="57" fill="rgb(53,53,53)"/>
<rect x="112.39" y="1478" width="8.30" height="57" fill="rgb(55,55,55)"/>
<rect x="120.09" y="1478" width="8.30" height="57" fill="rgb(58,58,58)"/>
<rect x="127.79" y="1478" width="8.30" height="57" fill="rgb(60,60,60)"/>
<rect x="135.49" y="1478" width="8.30" height="57" fill="rgb(62,62,62)"/>
<rect x="143.19" y="1478" width="8.30" height="57" fill="rgb(64,64,64)"/>
<rect x="150.89" y="1478" width="8.30" height="57" fill="rgb(66,66,66)"/>
<rect x="158.59" y="1478" width="8.30" height="57" fill="rgb(68,68,68)"/>
<rect x="166.29" y="1478" width="8.30" height="57" fill="rgb(70,70,70)"/>
<rect x="173.98" y="1478" width="8.30" height="57" fill="rgb(71,71,71)"/>
<rect x="181.68" y="1478" width="8.30" height="57" fill="rgb(73,73,73)"/>
<rect x="189.38" y="1478" width="8.30" height="57" fill="rgb(75,75,75)"/>
<rect x="197.08" y="1478" width="8.30" height="57" fill="rgb(77,77,77)"/>
<rect x="204.78" y="1478" width="8.30" height="57" fill="rgb(78,78,78)"/>
<rect x="212.48" y="1478" width="8.30" height="57" fill="rgb(80,80,80)"/>
<rect x="220.18" y="1478" width="8.30" height="57" fill="rgb(81,81,81)"/>
<rect x="227.88" y="1478" width="8.30" height="57" fill="rgb(83,83,83)"/>
<rect x="235.58" y="1478" width="8.30" height="57" fill="rgb(84,84,84)"/>
<rect x="243.28" y="1478" width="8.30" height="57" fill="rgb(86,86,86)"/>
<rect x="250.98" y="1478" width="8.30" height="57" fill="rgb(87,87,87)"/>
<rect x="258.68" y="1478" width="8.30" height="57" fill="rgb(89,89,89)"/>
<rect x="266.38" y="1478" width="8.30" height="57" fill="rgb(90,90,90)"/>
<rect x="274.07" y="1478" width="8.30" height="57" fill="rgb(92,92,92)"/>
<rect x="281.77" y="1478" width="8.30" height="57" fill="rgb(93,93,93)"/>
<rect x="289.47" y="1478" width="8.30" height="57" fill="rgb(94,94,94)"/>
<rect x="297.17" y="1478" width="8.30" height="57" fill="rgb(96,96,96)"/>
<rect x="304.87" y="1478" width="8.30" height="57" fill="rgb(97,97,97)"/>
<rect x="312.57" y="1478" width="8.30" height="57" fill="rgb(98,98,98)"/>
<rect x="320.27" y="1478" width="8.30" height="57" fill="rgb(100,100,100)"/>
<rect x="327.97" y="1478" width="8.30" height="57" fill="rgb(101,101,101)"/>
<rect x="335.67" y="1478" width="8.30" height="57" fill="rgb(102,102,102)"/>
<rect x="343.37" y="1478" width="8.30" height="57" fill="rgb(103,103,103)"/>
<rect x="351.07" y="1478" width="8.30" height="57" fill="rgb(105,105,105)"/>
<rect x="358.77" y="1478" width="8.30" height="57" fill="rgb(106,106,106)"/>
<rect x="366.46" y="1478" width="8.30" height="57" fill="rgb(107,107,107)"/>
<rect x="374.16" y="1478" width="8.30" height="57" fill="rgb(108,108,108)"/>
<rect x="381.86" y="1478" width="8.30" height="57" fill="rgb(109,109,109)"/>
<rect x="389.56" y="1478" width="8.30" height="57" fill="rgb(111,111,111)"/>
<rect x="397.26" y="1478" width="8.30" height="57" fill="rgb(112,112,112)"/>
<rect x="404.96" y="1478" width="8.30" height="57" fill="rgb(113,113,113)"/>
<rect x="412.66" y="1478" width="8.30" height="57" fill="rgb(114,114,114)"/>
<rect x="420.36" y="1478" width="8.30" height="57" fill="rgb(115,115,115)"/>
<rect x="428.06" y="1478" width="8.30" height="57" fill="rgb(116,116,116)"/>
<rect x="435.76" y="1478" width="8.30" height="57" fill="rgb(117,117,117)"/>
<rect x="443.46" y="1478" width="8.30" height="57" fill="rgb(118,118,118)"/>
<rect x="451.16" y="1478" width="8.30" height="57" fill="rgb(119,119,119)"/>
<rect x="458.86" y="1478" width="8.30" height="57" fill="rgb(121,121,121)"/>
<rect x="466.55" y="1478" width="8.30" height="57" fill="rgb(122,122,122)"/>
<rect x="474.25" y="1478" width="8.30" height="57" fill="rgb(123,123,123)"/>
<rect x="481.95" y="1478" width="8.30" height="57" fill="rgb(124,124,124)"/>
<rect x="489.65" y="1478" width="8.30" height="57" fill="rgb(125,125,125)"/>
<rect x="497.35" y="1478" width="8.30" height="57" fill="rgb(126,126,126)"/>
<rect x="505.05" y="1478" width="8.30" height="57" fill="rgb(127,127,127)"/>
<rect x="512.75" y="1478" width="8.30" height="57" fill="rgb(128,128,128)"/>
<rect x="520.45" y="1478" width="8.30" height="57" fill="rgb(129,129,129)"/>
<rect x="528.15" y="1478" width="8.30" height="57" fill="rgb(130,130,130)"/>
<rect x="535.85" y="1478" width="8.30" height="57" fill="rgb(131,131,131)"/>
<rect x="543.55" y="1478" width="8.30" height="57" fill="rgb(132,132,132)"/>
<rect x="551.25" y="1478" width="8.30" height="57" fill="rgb(133,133,133)"/>
<rect x="558.95" y="1478" width="8.30" height="57" fill="rgb(134,134,134)"/>
<rect x="566.64" y="1478" width="8.30" height="57" fill="rgb(135,135,135)"/>
<rect x="574.34" y="1478" width="8.30" height="57" fill="rgb(135,135,135)"/>
<rect x="582.04" y="1478" width="8.30" height="57" fill="rgb(136,136,136)"/>
<rect x="589.74" y="1478" width="8.30" height="57" fill="rgb(137,137,137)"/>
<rect x="597.44" y="1478" width="8.30" height="57" fill="rgb(138,138,138)"/>
<rect x="605.14" y="1478" width="8.30" height="57" fill="rgb(139,139,139)"/>
<rect x="612.84" y="1478" width="8.30" height="57" fill="rgb(140,140,140)"/>
<rect x="620.54" y="1478" width="8.30" height="57" fill="rgb(141,141,141)"/>
<rect x="628.24" y="1478" width="8.30" height="57" fill="rgb(142,142,142)"/>
<rect x="635.94" y="1478" width="8.30" height="57" fill="rgb(143,143,143)"/>
<rect x="643.64" y="1478" width="8.30" height="57" fill="rgb(144,144,144)"/>
<rect x="651.34" y="1478" width="8.30" height="57" fill="rgb(145,145,145)"/>
<rect x="659.04" y="1478" width="8.30" height="57" fill="rgb(145,145,145)"/>
<rect x="666.73" y="1478" width="8.30" height="57" fill="rgb(146,146,146)"/>
<rect x="674.43" y="1478" width="8.30" height="57" fill="rgb(147,147,147)"/>
<rect x="682.13" y="1478" width="8.30" height="57" fill="rgb(148,148,148)"/>
<rect x="689.83" y="1478" width="8.30" height="57" fill="rgb(149,149,149)"/>
<rect x="697.53" y="1478" width="8.30" height="57" fill="rgb(150,150,150)"/>
<rect x="705.23" y="1478" width="8.30" height="57" fill="rgb(151,151,151)"/>
<rect x="712.93" y="1478" width="8.30" height="57" fill="rgb(151,151,151)"/>
<rect x="720.63" y="1478" width="8.30" height="57" fill="rgb(152,152,152)"/>
<rect x="728.33" y="1478" width="8.30" height="57" fill="rgb(153,153,153)"/>
<rect x="736.03" y="1478" width="8.30" height="57" fill="rgb(154,154,154)"/>
<rect x="743.73" y="1478" width="8.30" height="57" fill="rgb(155,155,155)"/>
<rect x="751.43" y="1478" width="8.30" height="57" fill="rgb(156,156,156)"/>
<rect x="759.12" y="1478" width="8.30" height="57" fill="rgb(156,156,156)"/>
<rect x="766.82" y="1478" width="8.30" height="57" fill="rgb(157,157,157)"/>
<rect x="774.52" y="1478" width="8.30" height="57" fill="rgb(158,158,158)"/>
<rect x="782.22" y="1478" width="8.30" height="57" fill="rgb(159,159,159)"/>
<rect x="789.92" y="1478" width="8.30" height="57" fill="rgb(160,160,160)"/>
<rect x="797.62" y="1478" width="8.30" height="57" fill="rgb(160,160,160)"/>
<rect x="805.32" y="1478" width="8.30" height="57" fill="rgb(161,161,161)"/>
<rect x="813.02" y="1478" width="8.30" height="57" fill="rgb(162,162,162)"/>
<rect x="820.72" y="1478" width="8.30" height="57" fill="rgb(163,163,163)"/>
<rect x="828.42" y="1478" width="8.30" height="57" fill="rgb(164,164,164)"/>
<rect x="836.12" y="1478" width="8.30" height="57" fill="rgb(164,164,164)"/>
<rect x="843.82" y="1478" width="8.30" height="57" fill="rgb(165,165,165)"/>
<rect x="851.52" y="1478" width="8.30" height="57" fill="rgb(166,166,166)"/>
<rect x="859.21" y="1478" width="8.30" height="57" fill="rgb(167,167,167)"/>
<rect x="866.91" y="1478" width="8.30" height="57" fill="rgb(167,167,167)"/>
<rect x="874.61" y="1478" width="8.30" height="57" fill="rgb(168,168,168)"/>
<rect x="882.31" y="1478" width="8.30" height="57" fill="rgb(169,169,169)"/>
<rect x="890.01" y="1478" width="8.30" height="57" fill="rgb(170,170,170)"/>
<rect x="897.71" y="1478" width="8.30" height="57" fill="rgb(170,170,170)"/>
<rect x="905.41" y="1478" width="8.30" height="57" fill="rgb(171,171,171)"/>
<rect x="913.11" y="1478" width="8.30" height="57" fill="rgb(172,172,172)"/>
<rect x="920.81" y="1478" width="8.30" height="57" fill="rgb(173,173,173)"/>
<rect x="928.51" y="1478" width="8.30" height="57" fill="rgb(173,173,173)"/>
<rect x="936.21" y="1478" width="8.30" height="57" fill="rgb(174,174,174)"/>
<rect x="943.91" y="1478" width="8.30" height="57" fill="rgb(175,175,175)"/>
<rect x="951.61" y="1478" width="8.30" height="57" fill="rgb(176,176,176)"/>
<rect x="959.30" y="1478" width="8.30" height="57" fill="rgb(176,176,176)"/>
<rect x="967.00" y="1478" width="8.30" height="57" fill="rgb(177,177,177)"/>
<rect x="974.70" y="1478" width="8.30" height="57" fill="rgb(178,178,178)"/>
<rect x="982.40" y="1478" width="8.30" height="57" fill="rgb(179,179,179)"/>
<rect x="990.10" y="1478" width="8.30" height="57" fill="rgb(179,179,179)"/>
<rect x="997.80" y="1478" width="8.30" height="57" fill="rgb(180,180,180)"/>
<rect x="1005.50" y="1478" width="8.30" height="57" fill="rgb(181,181,181)"/>
<rect x="1013.20" y="1478" width="8.30" height="57" fill="rgb(181,181,181)"/>
<rect x="1020.90" y="1478" width="8.30" height="57" fill="rgb(182,182,182)"/>
<rect x="1028.60" y="1478" width="8.30" height="57" fill="rgb(183,183,183)"/>
<rect x="1036.30" y="1478" width="8.30" height="57" fill="rgb(183,183,183)"/>
<rect x="1044.00" y="1478" width="8.30" height="57" fill="rgb(184,184,184)"/>
<rect x="1051.70" y="1478" width="8.30" height="57" fill="rgb(185,185,185)"/>
<rect x="1059.39" y="1478" width="8.30" height="57" fill="rgb(186,186,186)"/>
<rect x="1067.09" y="1478" width="8.30" height="57" fill="rgb(186,186,186)"/>
<rect x="1074.79" y="1478" width="8.30" height="57" fill="rgb(187,187,187)"/>
<rect x="1082.49" y="1478" width="8.30" height="57" fill="rgb(188,188,188)"/>
<rect x="1090.19" y="1478" width="8.30" height="57" fill="rgb(188,188,188)"/>
<rect x="1097.89" y="1478" width="8.30" height="57" fill="rgb(189,189,189)"/>
<rect x="1105.59" y="1478" width="8.30" height="57" fill="rgb(190,190,190)"/>
<rect x="1113.29" y="1478" width="8.30" height="57" fill="rgb(190,190,190)"/>
<rect x="1120.99" y="1478" width="8.30" height="57" fill="rgb(191,191,191)"/>
<rect x="1128.69" y="1478" width="8.30" height="57" fill="rgb(192,192,192)"/>
<rect x="1136.39" y="1478" width="8.30" height="57" fill="rgb(192,192,192)"/>
<rect x="1144.09" y="1478" width="8.30" height="57" fill="rgb(193,193,193)"/>
<rect x="1151.79" y="1478" width="8.30" height="57" fill="rgb(194,194,194)"/>
<rect x="1159.48" y="1478" width="8.30" height="57" fill="rgb(194,194,194)"/>
<rect x="1167.18" y="1478" width="8.30" height="57" fill="rgb(195,195,195)"/>
<rect x="1174.88" y="1478" width="8.30" height="57" fill="rgb(196,196,196)"/>
<rect x="1182.58" y="1478" width="8.30" height="57" fill="rgb(196,196,196)"/>
<rect x="1190.28" y="1478" width="8.30" height="57" fill="rgb(197,197,197)"/>
<rect x="1197.98" y="1478" width="8.30" height="57" fill="rgb(198,198,198)"/>
<rect x="1205.68" y="1478" width="8.30" height="57" fill="rgb(198,198,198)"/>
<rect x="1213.38" y="1478" width="8.30" height="57" fill="rgb(199,199,199)"/>
<rect x="1221.08" y="1478" width="8.30" height="57" fill="rgb(199,199,199)"/>
<rect x="1228.78" y="1478" width="8.30" height="57" fill="rgb(200,200,200)"/>
<rect x="1236.48" y="1478" width="8.30" height="57" fill="rgb(201,201,201)"/>
<rect x="1244.18" y="1478" width="8.30" height="57" fill="rgb(201,201,201)"/>
<rect x="1251.88" y="1478" width="8.30" height="57" fill="rgb(202,202,202)"/>
<rect x="1259.57" y="1478" width="8.30" height="57" fill="rgb(203,203,203)"/>
<rect x="1267.27" y="1478" width="8.30" height="57" fill="rgb(203,203,203)"/>
<rect x="1274.97" y="1478" width="8.30" height="57" fill="rgb(204,204,204)"/>
<rect x="1282.67" y="1478" width="8.30" height="57" fill="rgb(204,204,204)"/>
<rect x="1290.37" y="1478" width="8.30" height="57" fill="rgb(205,205,205)"/>
<rect x="1298.07" y="1478" width="8.30" height="57" fill="rgb(206,206,206)"/>
<rect x="1305.77" y="1478" width="8.30" height="57" fill="rgb(206,206,206)"/>
<rect x="1313.47" y="1478" width="8.30" height="57" fill="rgb(207,207,207)"/>
<rect x="1321.17" y="1478" width="8.30" height="57" fill="rgb(208,208,208)"/>
<rect x="1328.87" y="1478" width="8.30" height="57" fill="rgb(208,208,208)"/>
<rect x="1336.57" y="1478" width="8.30" height="57" fill="rgb(209,209,209)"/>
<rect x="1344.27" y="1478" width="8.30" height="57" fill="rgb(209,209,209)"/>
<rect x="1351.96" y="1478" width="8.30" height="57" fill="rgb(210,210,210)"/>
<rect x="1359.66" y="1478" width="8.30" height="57" fill="rgb(211,211,211)"/>
<rect x="1367.36" y="1478" width="8.30" height="57" fill="rgb(211,211,211)"/>
<rect x="1375.06" y="1478" width="8.30" height="57" fill="rgb(212,212,212)"/>
<rect x="1382.76" y="1478" width="8.30" height="57" fill="rgb(212,212,212)"/>
<rect x="1390.46" y="1478" width="8.30" height="57" fill="rgb(213,213,213)"/>
<rect x="1398.16" y="1478" width="8.30" height="57" fill="rgb(214,214,214)"/>
<rect x="1405.86" y="1478" width="8.30" height="57" fill="rgb(214,214,214)"/>
<rect x="1413.56" y="1478" width="8.30" height="57" fill="rgb(215,215,215)"/>
<rect x="1421.26" y="1478" width="8.30" height="57" fill="rgb(215,215,215)"/>
<rect x="1428.96" y="1478" width="8.30" height="57" fill="rgb(216,216,216)"/>
<rect x="1436.66" y="1478" width="8.30" height="57" fill="rgb(217,217,217)"/>
<rect x="1444.36" y="1478" width="8.30" height="57" fill="rgb(217,217,217)"/>
<rect x="1452.05" y="1478" width="8.30" height="57" fill="rgb(218,218,218)"/>
<rect x="1459.75" y="1478" width="8.30" height="57" fill="rgb(218,218,218)"/>
<rect x="1467.45" y="1478" width="8.30" height="57" fill="rgb(219,219,219)"/>
<rect x="1475.15" y="1478" width="8.30" height="57" fill="rgb(220,220,220)"/>
<rect x="1482.85" y="1478" width="8.30" height="57" fill="rgb(220,220,220)"/>
<rect x="1490.55" y="1478" width="8.30" height="57" fill="rgb(221,221,221)"/>
<rect x="1498.25" y="1478" width="8.30" height="57" fill="rgb(221,221,221)"/>
<rect x="1505.95" y="1478" width="8.30" height="57" fill="rgb(222,222,222)"/>
<rect x="1513.65" y="1478" width="8.30" height="57" fill="rgb(222,222,222)"/>
<rect x="1521.35" y="1478" width="8.30" height="57" fill="rgb(223,223,223)"/>
<rect x="1529.05" y="1478" width="8.30" height="57" fill="rgb(224,224,224)"/>
<rect x="1536.75" y="1478" width="8.30" height="57" fill="rgb(224,224,224)"/>
<rect x="1544.45" y="1478" width="8.30" height="57" fill="rgb(225,225,225)"/>
<rect x="1552.14" y="1478" width="8.30" height="57" fill="rgb(225,225,225)"/>
<rect x="1559.84" y="1478" width="8.30" height="57" fill="rgb(226,226,226)"/>
<rect x="1567.54" y="1478" width="8.30" height="57" fill="rgb(226,226,226)"/>
<rect x="1575.24" y="1478" width="8.30" height="57" fill="rgb(227,227,227)"/>
<rect x="1582.94" y="1478" width="8.30" height="57" fill="rgb(228,228,228)"/>
<rect x="1590.64" y="1478" width="8.30" height="57" fill="rgb(228,228,228)"/>
<rect x="1598.34" y="1478" width="8.30" height="57" fill="rgb(229,229,229)"/>
<rect x="1606.04" y="1478" width="8.30" height="57" fill="rgb(229,229,229)"/>
<rect x="1613.74" y="1478" width="8.30" height="57" fill="rgb(230,230,230)"/>
<rect x="1621.44" y="1478" width="8.30" height="57" fill="rgb(230,230,230)"/>
<rect x="1629.14" y="1478" width="8.30" height="57" fill="rgb(231,231,231)"/>
<rect x="1636.84" y="1478" width="8.30" height="57" fill="rgb(231,231,231)"/>
<rect x="1644.54" y="1478" width="8.30" height="57" fill="rgb(232,232,232)"/>
<rect x="1652.23" y="1478" width="8.30" height="57" fill="rgb(233,233,233)"/>
<rect x="1659.93" y="1478" width="8.30" height="57" fill="rgb(233,233,233)"/>
<rect x="1667.63" y="1478" width="8.30" height="57" fill="rgb(234,234,234)"/>
<rect x="1675.33" y="1478" width="8.30" height="57" fill="rgb(234,234,234)"/>
<rect x="1683.03" y="1478" width="8.30" height="57" fill="rgb(235,235,235)"/>
<rect x="1690.73" y="1478" width="8.30" height="57" fill="rgb(235,235,235)"/>
<rect x="1698.43" y="1478" width="8.30" height="57" fill="rgb(236,236,236)"/>
<rect x="1706.13" y="1478" width="8.30" height="57" fill="rgb(236,236,236)"/>
<rect x="1713.83" y="1478" width="8.30" height="57" fill="rgb(237,237,237)"/>
<rect x="1721.53" y="1478" width="8.30" height="57" fill="rgb(237,237,237)"/>
<rect x="1729.23" y="1478" width="8.30" height="57" fill="rgb(238,238,238)"/>
<rect x="1736.93" y="1478" width="8.30" height="57" fill="rgb(238,238,238)"/>
<rect x="1744.62" y="1478" width="8.30" height="57" fill="rgb(239,239,239)"/>
<rect x="1752.32" y="1478" width="8.30" height="57" fill="rgb(240,240,240)"/>
<rect x="1760.02" y="1478" width="8.30" height="57" fill="rgb(240,240,240)"/>
<rect x="1767.72" y="1478" width="8.30" height="57" fill="rgb(241,241,241)"/>
<rect x="1775.42" y="1478" width="8.30" height="57" fill="rgb(241,241,241)"/>
<rect x="1783.12" y="1478" width="8.30" height="57" fill="rgb(242,242,242)"/>
<rect x="1790.82" y="1478" width="8.30" height="57" fill="rgb(242,242,242)"/>
<rect x="1798.52" y="1478" width="8.30" height="57" fill="rgb(243,243,243)"/>
<rect x="1806.22" y="1478" width="8.30" height="57" fill="rgb(243,243,243)"/>
<rect x="1813.92" y="1478" width="8.30" height="57" fill="rgb(244,244,244)"/>
<rect x="1821.62" y="1478" width="8.30" height="57" fill="rgb(244,244,244)"/>
<rect x="1829.32" y="1478" width="8.30" height="57" fill="rgb(245,245,245)"/>
<rect x="1837.02" y="1478" width="8.30" height="57" fill="rgb(245,245,245)"/>
<rect x="1844.71" y="1478" width="8.30" height="57" fill="rgb(246,246,246)"/>
<rect x="1852.41" y="1478" width="8.30" height="57" fill="rgb(246,246,246)"/>
<rect x="1860.11" y="1478" width="8.30" height="57" fill="rgb(247,247,247)"/>
<rect x="1867.81" y="1478" width="8.30" height="57" fill="rgb(247,247,247)"/>
<rect x="1875.51" y="1478" width="8.30" height="57" fill="rgb(248,248,248)"/>
<rect x="1883.21" y="1478" width="8.30" height="57" fill="rgb(248,248,248)"/>
<rect x="1890.91" y="1478" width="8.30" height="57" fill="rgb(249,249,249)"/>
<rect x="1898.61" y="1478" width="8.30" height="57" fill="rgb(249,249,249)"/>
<rect x="1906.31" y="1478" width="8.30" height="57" fill="rgb(250,250,250)"/>
<rect x="1914.01" y="1478" width="8.30" height="57" fill="rgb(250,250,250)"/>
<rect x="1921.71" y="1478" width="8.30" height="57" fill="rgb(251,251,251)"/>
<rect x="1929.41" y="1478" width="8.30" height="57" fill="rgb(251,251,251)"/>
<rect x="1937.11" y="1478" width="8.30" height="57" fill="rgb(252,252,252)"/>
<rect x="1944.80" y="1478" width="8.30" height="57" fill="rgb(252,252,252)"/>
<rect x="1952.50" y="1478" width="8.30" height="57" fill="rgb(253,253,253)"/>
<rect x="1960.20" y="1478" width="8.30" height="57" fill="rgb(253,253,253)"/>
<rect x="1967.90" y="1478" width="8.30" height="57" fill="rgb(254,254,254)"/>
<rect x="1975.60" y="1478" width="8.30" height="57" fill="rgb(254,254,254)"/>
<rect x="1983.30" y="1478" width="8.30" height="57" fill="rgb(255,255,255)"/>
</g>
<rect x="20" y="1478" width="1971" height="57" fill="none" stroke="#000" stroke-width="4.17"/>
<path d="M20.00 1535V1553.8" stroke="#000" stroke-width="4.17" fill="none"/>
<path d="M119.15 1535V1546.2" stroke="#000" stroke-width="2.78" fill="none"/>
<path d="M217.70 1535V1546.2" stroke="#000" stroke-width="2.78" fill="none"/>
<path d="M316.25 1535V1546.2" stroke="#000" stroke-width="2.78" fill="none"/>
<path d="M414.20 1535V1553.8" stroke="#000" stroke-width="4.17" fill="none"/>
<path d="M513.35 1535V1546.2" stroke="#000" stroke-width="2.78" fill="none"/>
<path d="M611.90 1535V1546.2" stroke="#000" stroke-width="2.78" fill="none"/>
<path d="M710.45 1535V1546.2" stroke="#000" stroke-width="2.78" fill="none"/>
<path d="M808.40 1535V1553.8" stroke="#000" stroke-width="4.17" fill="none"/>
<path d="M907.55 1535V1546.2" stroke="#000" stroke-width="2.78" fill="none"/>
<path d="M1006.10 1535V1546.2" stroke="#000" stroke-width="2.78" fill="none"/>
<path d="M1104.65 1535V1546.2" stroke="#000" stroke-width="2.78" fill="none"/>
<path d="M1202.60 1535V1553.8" stroke="#000" stroke-width="4.17" fill="none"/>
<path d="M1301.75 1535V1546.2" stroke="#000" stroke-width="2.78" fill="none"/>
<path d="M1400.30 1535V1546.2" stroke="#000" stroke-width="2.78" fill="none"/>
<path d="M1498.85 1535V1546.2" stroke="#000" stroke-width="2.78" fill="none"/>
<path d="M1596.80 1535V1553.8" stroke="#000" stroke-width="4.17" fill="none"/>
<path d="M1695.95 1535V1546.2" stroke="#000" stroke-width="2.78" fill="none"/>
<path d="M1794.50 1535V1546.2" stroke="#000" stroke-width="2.78" fill="none"/>
<path d="M1893.05 1535V1546.2" stroke="#000" stroke-width="2.78" fill="none"/>
<path d="M1991.00 1535V1553.8" stroke="#000" stroke-width="4.17" fill="none"/>
<text class="mono" x="20.00" y="1572.9" font-size="22.2" fill="#000" text-anchor="middle">0.0</text>
<text class="mono" x="414.20" y="1572.9" font-size="22.2" fill="#000" text-anchor="middle">0.2</text>
<text class="mono" x="808.40" y="1572.9" font-size="22.2" fill="#000" text-anchor="middle">0.4</text>
<text class="mono" x="1202.60" y="1572.9" font-size="22.2" fill="#000" text-anchor="middle">0.6</text>
<text class="mono" x="1596.80" y="1572.9" font-size="22.2" fill="#000" text-anchor="middle">0.8</text>
<text class="mono" x="1991.00" y="1572.9" font-size="22.2" fill="#000" text-anchor="middle">1.0</text>
<text class="mono" x="1005.6" y="1517" font-size="27.8" font-weight="bold" fill="#000" text-anchor="middle">Reflectancia</text>
</svg>
</body></html>
